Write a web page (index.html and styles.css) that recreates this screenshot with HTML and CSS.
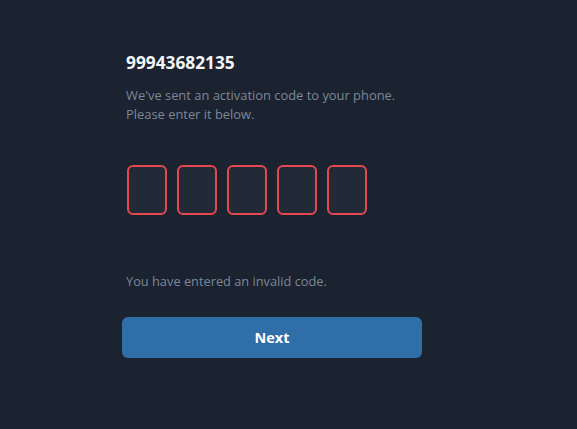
FILE: index.html
```html
<!DOCTYPE html>
<html lang="en">
<head>
    <meta charset="UTF-8">
    <title>Activation code</title>
    <link rel="stylesheet" href="styles.css">
</head>
<body>
    <main class="auth">
        <h1 class="phone">99943682135</h1>
        <p class="hint">We've sent an activation code to your phone.<br>Please enter it below.</p>
        <div class="code-inputs">
            <input class="code-box invalid" type="text" maxlength="1">
            <input class="code-box invalid" type="text" maxlength="1">
            <input class="code-box invalid" type="text" maxlength="1">
            <input class="code-box invalid" type="text" maxlength="1">
            <input class="code-box invalid" type="text" maxlength="1">
        </div>
        <p class="error">You have entered an invalid code.</p>
        <button class="next-btn">Next</button>
    </main>
</body>
</html>
```

FILE: styles.css
```css
body {
    margin: 0;
    font-family: 'Open Sans', 'Noto Sans', sans-serif;
    background: #1b2230;
    color: #fff;
    min-height: 100vh;
}
.auth {
    width: 300px;
    padding: 52px 0 0 122px;
}
.phone {
    font-size: 17.3px;
    font-weight: 700;
    margin: 0 0 12px 4px;
    line-height: 22px;
    color: #f3f5f8;
}
.hint {
    margin: 0 0 0 4px;
    font-size: 12.9px;
    line-height: 19px;
    color: #7b8898;
}
.code-inputs {
    display: flex;
    gap: 10px;
    margin: 41px 0 0 5px;
}
.code-box {
    box-sizing: border-box;
    width: 40px;
    height: 50px;
    background: #222a38;
    border: 2px solid #e5484f;
    border-radius: 6px;
    outline: none;
    color: #fff;
    text-align: center;
    font-size: 20px;
    font-family: inherit;
    padding: 0;
}
.error {
    margin: 57px 0 0 4px;
    font-size: 12.8px;
    line-height: 19px;
    color: #7b8898;
}
.next-btn {
    display: block;
    width: 300px;
    height: 41px;
    margin-top: 26px;
    background: #2f6ea9;
    border: none;
    border-radius: 6px;
    color: #fff;
    font-family: inherit;
    font-size: 14.5px;
    font-weight: 700;
    cursor: pointer;
}
```
